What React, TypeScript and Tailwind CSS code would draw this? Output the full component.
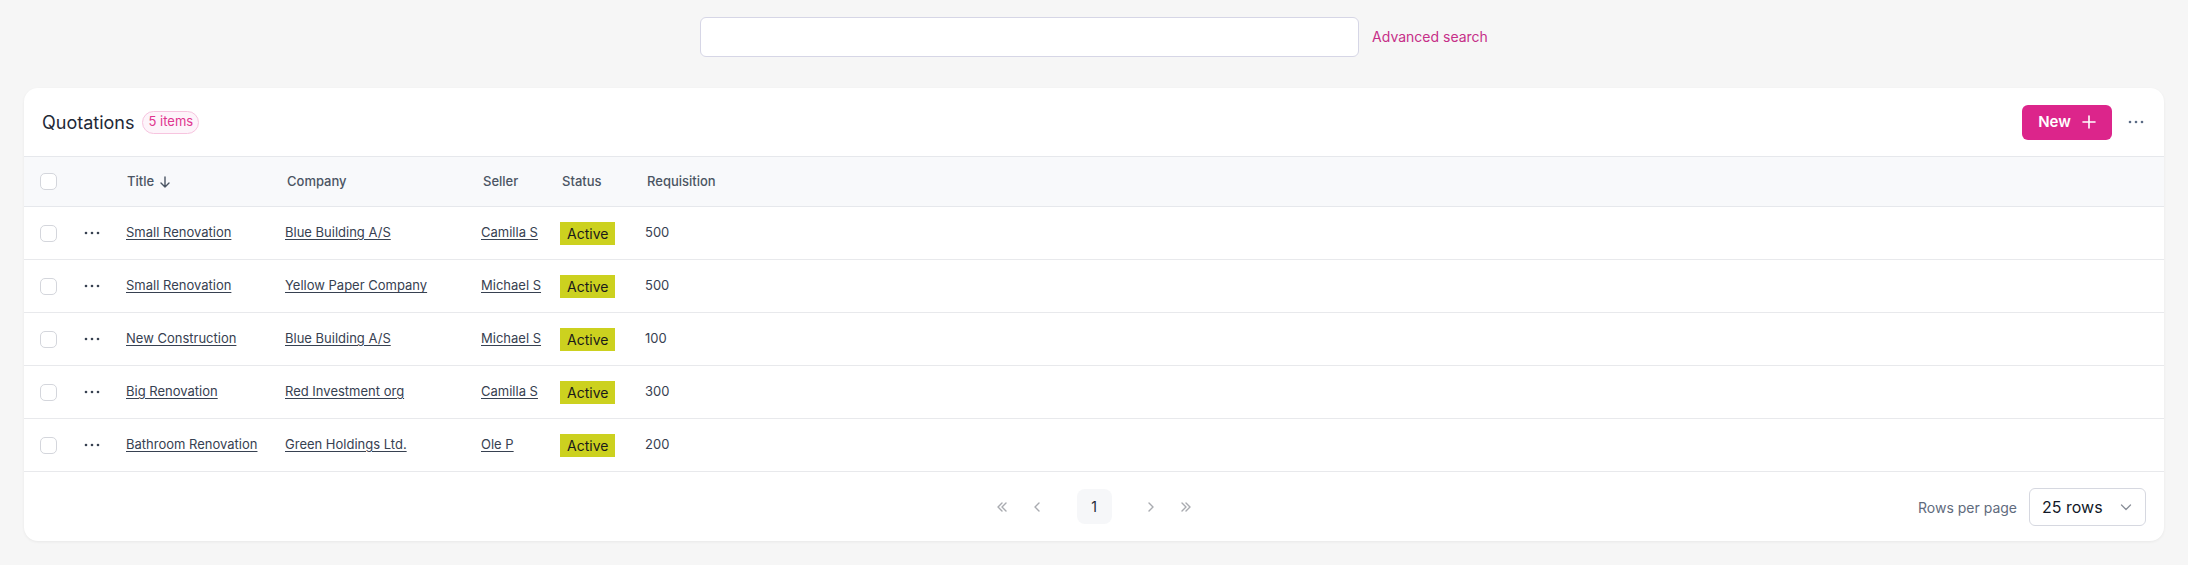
import React from "react";

type Row = {
  title: string;
  company: string;
  seller: string;
  status: string;
  requisition: number;
};

const rows: Row[] = [
  { title: "Small Renovation", company: "Blue Building A/S", seller: "Camilla S", status: "Active", requisition: 500 },
  { title: "Small Renovation", company: "Yellow Paper Company", seller: "Michael S", status: "Active", requisition: 500 },
  { title: "New Construction", company: "Blue Building A/S", seller: "Michael S", status: "Active", requisition: 100 },
  { title: "Big Renovation", company: "Red Investment org", seller: "Camilla S", status: "Active", requisition: 300 },
  { title: "Bathroom Renovation", company: "Green Holdings Ltd.", seller: "Ole P", status: "Active", requisition: 200 },
];

const cols = "grid grid-cols-[44px_42px_159px_196px_79px_85px_1fr] items-center pl-4";

const Dots = ({ className = "" }: { className?: string }) => (
  <svg width="16" height="4" viewBox="0 0 16 4" className={className}>
    <circle cx="2" cy="2" r="1.3" fill="currentColor" />
    <circle cx="8" cy="2" r="1.3" fill="currentColor" />
    <circle cx="14" cy="2" r="1.3" fill="currentColor" />
  </svg>
);

const Checkbox = () => (
  <div className="w-[17px] h-[17px] rounded-[5px] border border-[#d4d6dc] bg-white" />
);

const Chevron = ({ d }: { d: string }) => (
  <button className="w-[35px] h-[35px] flex items-center justify-center text-[#a9abb0]">
    <svg width="16" height="16" viewBox="0 0 16 16" fill="none" stroke="currentColor" strokeWidth="1.4" strokeLinecap="round" strokeLinejoin="round">
      <path d={d} />
    </svg>
  </button>
);

export default function App() {
  return (
    <div className="min-h-[565px] bg-[#f6f6f6] px-6 pt-[17px] pb-6 font-['Inter',sans-serif] text-[#374151]">
      <div className="flex items-center justify-center gap-[13px]">
        <input
          className="w-[659px] h-10 rounded-md border border-[#d6d6e6] bg-white outline-none"
          aria-label="Search"
        />
        <a className="text-[14px] text-[#c62f88] leading-none">Advanced search</a>
      </div>

      <div className="mt-[31px] bg-white rounded-[14px] shadow-[0_1px_3px_rgba(0,0,0,0.06)] overflow-hidden">
        <div className="h-[68px] flex items-center justify-between pl-[18px] pr-5">
          <div className="flex items-center gap-2">
            <h1 className="text-[18px] text-[#1f2937] font-normal">Quotations</h1>
            <span className="h-[23px] px-[5px] flex items-center rounded-full border border-[#f7c4df] bg-[#fdf4fa] text-[13px] text-[#e0368f]">
              5 items
            </span>
          </div>
          <div className="flex items-center gap-4">
            <button className="w-[90px] h-[35px] rounded-md bg-[#dc258b] text-white text-[15px] font-semibold flex items-center justify-center gap-[11px]">
              New
              <svg width="14" height="14" viewBox="0 0 14 14" stroke="currentColor" strokeWidth="1.6" strokeLinecap="round">
                <path d="M7 1v12M1 7h12" />
              </svg>
            </button>
            <Dots className="text-[#5b6b85]" />
          </div>
        </div>

        <div className={`${cols} h-[51px] bg-[#f8f9fb] border-y border-[#e6e8ec] text-[13px] font-medium text-[#4b5563]`}>
          <Checkbox />
          <span />
          <span className="flex items-center gap-1 pl-px">
            Title
            <svg width="14" height="14" viewBox="0 0 14 14" fill="none" stroke="currentColor" strokeWidth="1.4" strokeLinecap="round" strokeLinejoin="round">
              <path d="M7 2v10M3 8l4 4 4-4" />
            </svg>
          </span>
          <span className="pl-0.5">Company</span>
          <span className="pl-0.5">Seller</span>
          <span className="pl-0.5">Status</span>
          <span className="pl-0.5">Requisition</span>
        </div>

        {rows.map((r, i) => (
          <div key={i} className={`${cols} h-[53px] border-b border-[#e8e9ec] text-[13px] text-[#374151]`}>
            <Checkbox />
            <Dots className="text-[#374151]" />
            <a className="underline underline-offset-2">{r.title}</a>
            <a className="underline underline-offset-2">{r.company}</a>
            <a className="underline underline-offset-2">{r.seller}</a>
            <span>
              <span className="inline-flex items-center h-[23px] px-[7px] bg-[#ccd11f] text-[14px] text-[#1a1a1a]">
                {r.status}
              </span>
            </span>
            <span>{r.requisition}</span>
          </div>
        ))}

        <div className="relative h-[69px] flex items-center justify-center">
          <div className="flex items-center">
            <Chevron d="M8 4L4 8l4 4M12 4L8 8l4 4" />
            <Chevron d="M10 4L6 8l4 4" />
            <span className="ml-[22px] mr-[22px] w-[35px] h-[35px] rounded-lg bg-[#f6f7f9] flex items-center justify-center text-[14px] text-[#1f2937]">
              1
            </span>
            <Chevron d="M6 4l4 4-4 4" />
            <Chevron d="M4 4l4 4-4 4M8 4l4 4-4 4" />
          </div>
          <div className="absolute right-[18px] top-[16px] flex items-center gap-3">
            <span className="text-[14px] text-[#5f6b7d]">Rows per page</span>
            <div className="w-[117px] h-[38px] rounded-md border border-[#d6d8e0] flex items-center justify-between pl-3 pr-3 text-[16px] text-[#111827]">
              25 rows
              <svg width="14" height="14" viewBox="0 0 14 14" fill="none" stroke="#8a8f99" strokeWidth="1.3" strokeLinecap="round" strokeLinejoin="round">
                <path d="M2.5 5l4.5 4.5L11.5 5" />
              </svg>
            </div>
          </div>
        </div>
      </div>
    </div>
  );
}
